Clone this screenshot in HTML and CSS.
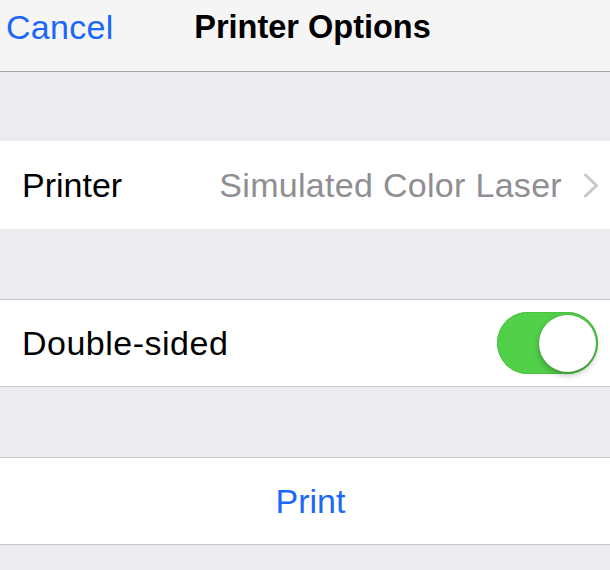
FILE: index.html
```html
<!DOCTYPE html>
<html lang="en">

<head>
    <meta charset="UTF-8">
    <meta name="viewport" content="width=device-width, initial-scale=1.0">
    <title>Printer Options</title>
    <link rel="stylesheet" href="styles.css">
</head>

<body>
    <div class="nav-bar">
        <span class="nav-button">Cancel</span>
        <span class="nav-title">Printer Options</span>
        <span></span>
    </div>

    <div class="group plain first">
        <div class="cell cell-tall">
            <span class="label">Printer</span>
            <span class="detail">
                Simulated Color Laser
                <svg class="chevron" width="16" height="25" viewBox="0 0 16 25">
                    <polyline points="2.5,2 13.5,12.5 2.5,23" fill="none" stroke="#c7c7cc" stroke-width="3" stroke-linecap="round" stroke-linejoin="round" />
                </svg>
            </span>
        </div>
    </div>

    <div class="group">
        <div class="cell">
            <span class="label wide">Double-sided</span>
            <span class="switch on"><span class="knob"></span></span>
        </div>
    </div>

    <div class="group">
        <div class="cell cell-button">Print</div>
    </div>
</body>

</html>
```

FILE: styles.css
```css
* {
    margin: 0;
    padding: 0;
    box-sizing: border-box;
}

body {
    background: #ebebf0;
    font-family: 'Liberation Sans', Arial, Helvetica, sans-serif;
    font-size: 34px;
    color: #000;
    min-height: 100vh;
}

.nav-bar {
    display: grid;
    grid-template-columns: 1fr auto 1fr;
    align-items: start;
    height: 72px;
    padding: 7px 0 0 6px;
    background: #f5f5f5;
    border-bottom: 1px solid #a6a6aa;
    line-height: 40px;
}

.nav-button {
    color: #1c67fb;
    letter-spacing: 0.3px;
}

.nav-title {
    font-weight: bold;
    font-size: 32.5px;
    padding-left: 9px;
}

.group {
    margin-top: 70px;
    background: #fff;
    border-top: 1px solid #c8c7cc;
    border-bottom: 1px solid #c8c7cc;
}

.group.plain {
    border: none;
}

.group.first {
    margin-top: 69px;
}

.cell {
    display: flex;
    justify-content: space-between;
    align-items: center;
    height: 86px;
    padding: 0 12px 0 22px;
}

.cell-tall {
    height: 88px;
    padding-right: 11px;
}

.label.wide {
    letter-spacing: 0.5px;
}

.detail {
    display: flex;
    align-items: center;
    gap: 21px;
    color: #8e8e93;
    letter-spacing: 0.3px;
}

.chevron {
    display: block;
    margin-top: 1px;
}

.switch {
    display: flex;
    justify-content: flex-end;
    align-items: center;
    width: 101px;
    height: 62px;
    padding: 0 2px;
    border-radius: 31px;
    background: #e5e5ea;
}

.switch.on {
    background: #52d04a;
    box-shadow: inset 0 0 0 1px #4ac442;
}

.knob {
    width: 57px;
    height: 57px;
    border-radius: 50%;
    background: #fff;
    box-shadow: 0 3px 6px rgba(0, 0, 0, 0.28), 0 0 1px rgba(0, 0, 0, 0.25);
}

.cell-button {
    justify-content: center;
    padding: 0 0 0 11px;
    color: #1c67fb;
}
```
